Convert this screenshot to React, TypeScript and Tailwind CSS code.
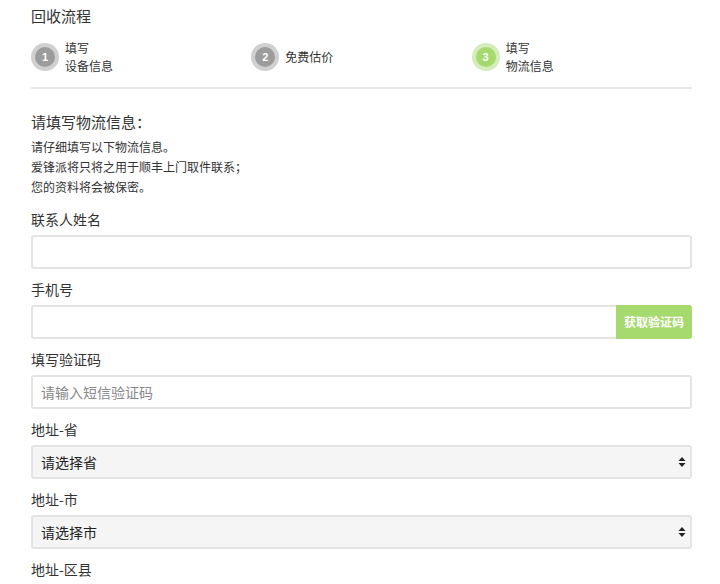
const steps = [
  { n: 1, lines: ["填写", "设备信息"], active: false },
  { n: 2, lines: ["免费估价"], active: false },
  { n: 3, lines: ["填写", "物流信息"], active: true },
];

function Field({ label, children }: { label: string; children: React.ReactNode }) {
  return (
    <div className="mb-[10px]">
      <label className="block text-[14px] leading-[20px] text-[#333] mb-[6px]">{label}</label>
      {children}
    </div>
  );
}

function Select({ placeholder }: { placeholder: string }) {
  return (
    <div className="relative h-[34px] rounded-[3px] border-2 border-[#e4e4e4] bg-[#f5f5f5] flex items-center pl-[8px]">
      <span className="text-[14px] text-[#222]">{placeholder}</span>
      <svg className="absolute right-[4px] top-1/2 -translate-y-1/2" width="8" height="12" viewBox="0 0 8 12">
        <path d="M4 1 L7.5 5 H0.5 Z" fill="#222" />
        <path d="M4 11 L7.5 7 H0.5 Z" fill="#222" />
      </svg>
    </div>
  );
}

export default function App() {
  return (
    <div
      className="w-[720px] h-[584px] overflow-hidden bg-white pl-[31px] pr-[28px] pt-[5px] text-[#333]"
      style={{ fontFamily: '"Noto Sans CJK SC", "Noto Sans", sans-serif' }}
    >
      <h2 className="text-[15px] leading-[22px]">回收流程</h2>

      {/* Steps */}
      <div className="grid grid-cols-3 mt-[15px] pb-[15px] border-b-2 border-[#e8e8e8]">
        {steps.map((s) => (
          <div key={s.n} className="flex items-center gap-[6px] h-[30px]">
            <div
              className={`w-[28px] h-[28px] rounded-full flex items-center justify-center ${
                s.active ? "bg-[#d5ecbb]" : "bg-[#d0d0d0]"
              }`}
            >
              <div
                className={`w-[20px] h-[20px] rounded-full flex items-center justify-center text-white text-[11px] font-bold ${
                  s.active ? "bg-[#a6d96e]" : "bg-[#9c9c9c]"
                }`}
                style={{ fontFamily: '"Liberation Sans", sans-serif' }}
              >
                {s.n}
              </div>
            </div>
            <div className="text-[12px] leading-[18px] text-[#333]">
              {s.lines.map((l) => (
                <div key={l}>{l}</div>
              ))}
            </div>
          </div>
        ))}
      </div>

      {/* Intro */}
      <h3 className="text-[15px] leading-[22px] mt-[22px]">请填写物流信息：</h3>
      <div className="text-[12px] leading-[20px] mt-[4px] mb-[12px]">
        <p>请仔细填写以下物流信息。</p>
        <p>爱锋派将只将之用于顺丰上门取件联系；</p>
        <p>您的资料将会被保密。</p>
      </div>

      <Field label="联系人姓名">
        <input className="block w-full h-[34px] rounded-[3px] border-2 border-[#e4e4e4] px-[8px] text-[14px] outline-none" />
      </Field>

      <Field label="手机号">
        <div className="flex h-[34px]">
          <input className="flex-1 min-w-0 h-full rounded-l-[3px] border-2 border-r-0 border-[#e4e4e4] px-[8px] text-[14px] outline-none" />
          <button className="w-[76px] h-full rounded-r-[3px] bg-[#a6d96e] text-white text-[12px] font-bold">
            获取验证码
          </button>
        </div>
      </Field>

      <Field label="填写验证码">
        <input
          placeholder="请输入短信验证码"
          className="block w-full h-[34px] rounded-[3px] border-2 border-[#e4e4e4] px-[8px] text-[14px] outline-none placeholder:text-[#888]"
        />
      </Field>

      <Field label="地址-省">
        <Select placeholder="请选择省" />
      </Field>

      <Field label="地址-市">
        <Select placeholder="请选择市" />
      </Field>

      <Field label="地址-区县">
        <Select placeholder="请选择区县" />
      </Field>
    </div>
  );
}
